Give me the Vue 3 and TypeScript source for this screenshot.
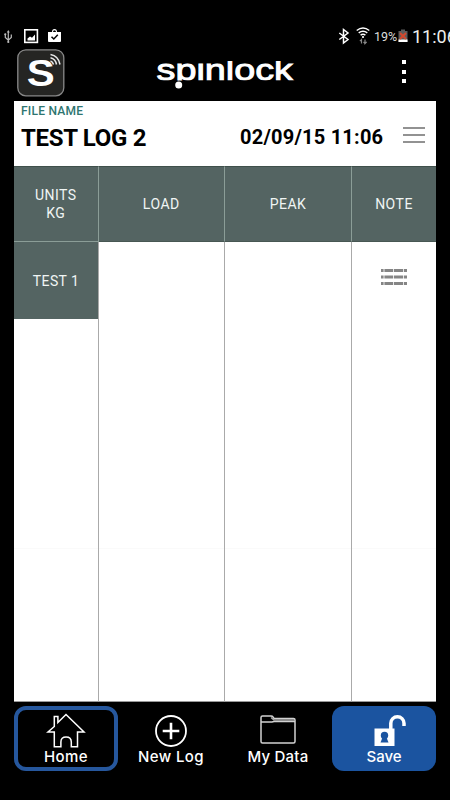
<script setup lang="ts">
interface Cell {
  lines: string[]
}

const headers: Cell[] = [
  { lines: ['UNITS', 'KG'] },
  { lines: ['LOAD'] },
  { lines: ['PEAK'] },
  { lines: ['NOTE'] },
]
</script>

<template>
  <div class="screen">
    <div class="status">
      <svg class="left-icons" width="70" height="20" viewBox="0 0 70 20">
        <g fill="none" stroke="#bbb" stroke-width="1.200">
          <path d="M8.300 4.500V15M5.300 7v3.500l3 2.600 3-2.600V7.500" />
          <path d="M8.300 3l-1.500 2.500h3z" fill="#bbb" stroke="none" />
          <circle cx="8.300" cy="15" r="1.100" fill="#bbb" stroke="none" />
          <circle cx="5.300" cy="7.300" r=".5" fill="#bbb" />
        </g>
        <rect x="24.800" y="2.800" width="12.600" height="12.600" fill="none" stroke="#fff" stroke-width="1.600" />
        <path d="M27.500 13.500v-2l2.500-2 2 1.300 3-3.300v6z" fill="#fff" />
        <path d="M48 5h4q0-3 2.500-3T57 5h4v9q0 1-1 1H49q-1 0-1-1z" fill="#fff" />
        <path d="M53 5q0-1.700 1.500-1.700T56 5z" fill="#000" />
        <path d="M51.500 9.700l2.300 2.300 4-4.200" fill="none" stroke="#000" stroke-width="1.500" />
      </svg>
      <div class="right-status">
        <svg width="40" height="20" viewBox="338 26 40 20">
          <path d="M339.300 33l8.700 6.500-4.500 3.500V29.500l4.500 3.500-8.700 6.500" fill="none" stroke="#fff" stroke-width="1.500" />
          <g fill="none" stroke="#fff" stroke-width="1.500">
            <path d="M356.700 30.500q6.300-4.900 12.600 0M358.700 32.900q4.300-3.300 8.600 0M360.600 35.200q2.400-1.800 4.800 0" />
          </g>
          <circle cx="363" cy="37" r="1.100" fill="#fff" />
          <path d="M361.500 43.500v-4l-1.600 1.700M361.500 39.500M365 39.500v4l1.700-1.700M365 43.500l-1.500-1.600" fill="none" stroke="#888" stroke-width="1.200" />
        </svg>
        <span class="percent">19%</span>
        <svg class="battery" width="10" height="15" viewBox="0 0 10 15">
          <path d="M.5 2h2.500V.5h4V2h2.500v11H.5z" fill="#5b5b5b" />
          <path d="M.5 10.500h9V13h-9z" fill="#fff" />
          <path d="M2 4l6 6M8 4l-6 6" stroke="#d3482d" stroke-width="2" />
        </svg>
        <span class="clock">11:06</span>
      </div>
    </div>

    <header class="appbar">
      <svg class="badge" width="48" height="48" viewBox="0 0 48 48">
        <rect x=".8" y=".8" width="46" height="46" rx="8" fill="#252523" stroke="#898989" stroke-width="1.300" />
        <text x="9.800" y="36.500" textLength="28" lengthAdjust="spacingAndGlyphs" class="badge-s">S</text>
        <g fill="none" stroke="#e8e8e8" stroke-width="1.500">
          <path d="M33.500 5.500q8 1.500 9.500 10M33.500 8.800q5 1.200 6 6.700M33.500 12q2.300.7 3 3.500" />
        </g>
      </svg>
      <svg class="brand" width="140" height="32" viewBox="155 58 140 32">
        <defs>
          <clipPath id="wordmark"><path d="M155 61h140v19.500H155z" /></clipPath>
        </defs>
        <text x="156.500" y="79.500" textLength="136.500" lengthAdjust="spacingAndGlyphs" class="brand-text" clip-path="url(#wordmark)">spinlock</text>
        <circle cx="178.700" cy="85" r="3.500" fill="#fff" />
      </svg>
      <div class="more"><i></i><i></i><i></i></div>
    </header>

    <main class="panel">
      <section class="file">
        <div class="file-label">FILE NAME</div>
        <div class="file-row">
          <span class="file-name">TEST LOG 2</span>
          <span class="date">02/09/15 11:06</span>
          <div class="burger"><i></i><i></i><i></i></div>
        </div>
      </section>
      <section class="table">
        <div v-for="(h, i) in headers" :key="i" class="cell head">
          <span v-for="line in h.lines" :key="line">{{ line }}</span>
        </div>
        <div class="cell body"><div class="row-name">TEST 1</div></div>
        <div class="cell body"></div>
        <div class="cell body"></div>
        <div class="cell body last">
          <svg class="note" width="26" height="17" viewBox="0 0 26 17">
            <path d="M0 1.500h26M0 8h26M0 14.500h26" stroke="#858585" stroke-width="3" />
            <path d="M3 0v17M12.500 0v17M22.500 0v17" stroke="#fff" stroke-width=".8" />
          </svg>
        </div>
      </section>
    </main>

    <nav class="nav">
      <button class="tab home">
        <svg width="40" height="36" viewBox="0 0 40 36">
          <path d="M8.300 19H2L8.300 13.500V3.500h3.600V9.500L20 1.500 38 19H31.500v14.800h-6.200V29q0-5-5.200-5t-5.200 5v4.800H8.300z" fill="none" stroke="#fff" stroke-width="1.500" />
        </svg>
        <span>Home</span>
      </button>
      <button class="tab new">
        <svg width="40" height="36" viewBox="0 0 40 36">
          <circle cx="20" cy="18" r="15" fill="none" stroke="#fff" stroke-width="1.800" />
          <path d="M11.700 18h16.600M20 9.700v16.600" stroke="#fff" stroke-width="2.600" />
        </svg>
        <span>New Log</span>
      </button>
      <button class="tab data">
        <svg width="40" height="36" viewBox="0 0 40 36">
          <path d="M4.500 3h8.500q1.500 0 2 1l1 1.500h19.500q1.500 0 1.500 1.500v21.500q0 1.500-1.500 1.500h-31Q3 30 3 28.500v-24Q3 3 4.500 3zM3 9h11l2-.5h20.500" fill="none" stroke="#d2d2d2" stroke-width="1.500" />
          <path d="M13 4.500l3 2.500h20" stroke="#aaa" stroke-width="1.500" fill="none" />
        </svg>
        <span>My Data</span>
      </button>
      <button class="tab save">
        <svg width="40" height="36" viewBox="0 0 40 36">
          <path d="M10.500 15.500h20v17.500h-20z" fill="#fff" />
          <path d="M26.800 17V10.300a6.600 6.600 0 0 1 13.200 0V13" fill="none" stroke="#fff" stroke-width="3.500" />
          <circle cx="20.500" cy="22.500" r="3.700" fill="#1b54a0" />
          <path d="M18.500 24.500h4l2 5h-8z" fill="#1b54a0" />
        </svg>
        <span>Save</span>
      </button>
    </nav>
  </div>
</template>

<style>
body {
  background: #000;
}
</style>

<style scoped>
.screen {
  width: 450px;
  height: 800px;
  overflow: hidden;
  background: #000;
  color: #fff;
  font-family: Roboto, "Liberation Sans", sans-serif;
}
.status {
  height: 49px;
  padding-top: 27px;
  box-sizing: border-box;
  display: flex;
  justify-content: space-between;
}
.right-status {
  display: flex;
  width: 112px;
  flex: none;
  white-space: nowrap;
}
.right-status svg {
  flex: none;
  margin-top: -1px;
}
.percent {
  margin-left: -4px;
  width: 24px;
  flex: none;
  font-size: 12.500px;
  line-height: 20px;
  color: #ddd;
}
.right-status .battery {
  margin-top: 2px;
}
.clock {
  margin-left: 4px;
  font-size: 18px;
  line-height: 19px;
  color: #eee;
}
.appbar {
  height: 52px;
  padding: 0 44px 0 17px;
  display: flex;
}
.badge-s {
  font: bold 37px "Liberation Sans", sans-serif;
  fill: #fff;
}
.brand {
  margin: 9px 0 0 90px;
}
.brand-text {
  font: 30px "Liberation Sans", sans-serif;
  fill: #fff;
  stroke: #fff;
  stroke-width: .9px;
}
.more {
  width: 4px;
  margin-left: auto;
  padding-top: 11px;
  display: flex;
  flex-direction: column;
  gap: 5.500px;
}
.more i {
  width: 4px;
  height: 4px;
  background: #fff;
}
.panel {
  width: 422px;
  height: 601px;
  margin: 0 auto;
  background: #fff;
  display: flex;
  flex-direction: column;
}
.file {
  height: 65px;
  padding: 3px 11px 0 7px;
  box-sizing: border-box;
}
.file-label {
  font-size: 12px;
  font-weight: 500;
  line-height: 14px;
  letter-spacing: .25px;
  color: #2e7570;
}
.file-row {
  display: flex;
  align-items: center;
  margin-top: 6px;
  color: #000;
  font-weight: 700;
}
.file-name {
  width: 219px;
  font-size: 24px;
  line-height: 28px;
  letter-spacing: -.3px;
  white-space: nowrap;
}
.date {
  flex: 1;
  font-size: 20px;
  line-height: 26px;
  padding-bottom: 2px;
  letter-spacing: .22px;
  white-space: nowrap;
}
.burger {
  width: 22px;
  display: flex;
  flex-direction: column;
  gap: 5px;
  margin-top: -6px;
}
.burger i {
  height: 2px;
  background: #929292;
}
.table {
  flex: 1;
  display: grid;
  grid-template-columns: 84.500px 126.500px 127px 84px;
  grid-template-rows: 76px 1fr;
}
.cell {
  box-sizing: border-box;
  border-right: 1px solid #aaa;
}
.cell:nth-child(4n) {
  border-right: 0;
}
.head {
  background: #546462;
  border-top: 1px solid #3f504b;
  border-bottom: 1px solid #8b9d97;
  border-right-color: #8b9d97;
  color: #f0f5f4;
  display: flex;
  flex-direction: column;
  align-items: center;
  justify-content: center;
  font-size: 14px;
  line-height: 18.500px;
  letter-spacing: .5px;
}
.head:not(:first-child) {
  border-bottom-color: #475753;
  padding-top: 1px;
}
.body {
  background: linear-gradient(#fafafa, #fafafa) 0 306px / 100% 1px no-repeat;
  border-bottom: 1px solid #999;
}
.row-name {
  height: 77px;
  margin-right: -.5px;
  background: #546462;
  color: #f0f5f4;
  display: flex;
  align-items: center;
  justify-content: center;
  font-size: 14px;
  letter-spacing: .4px;
}
.last {
  padding-top: 27px;
}
.note {
  display: block;
  margin: 0 auto;
}
.nav {
  height: 65px;
  margin: 4px 14px 0;
  display: grid;
  grid-template-columns: 104px 106px 108px 104px;
}
.tab {
  border: 0;
  margin: 0;
  padding: 7px 0 0;
  background: #000;
  color: #fff;
  border-radius: 12px;
  display: flex;
  flex-direction: column;
  align-items: center;
  font: 500 15px/16px Inter, "Open Sans", sans-serif;
  letter-spacing: .4px;
}
.tab svg {
  flex: none;
  overflow: visible;
}
.data {
  letter-spacing: .2px;
}
.save {
  background: #1b54a0;
  letter-spacing: 0;
}
.home {
  border: 4px solid #26579d;
  padding-top: 3px;
}
</style>
